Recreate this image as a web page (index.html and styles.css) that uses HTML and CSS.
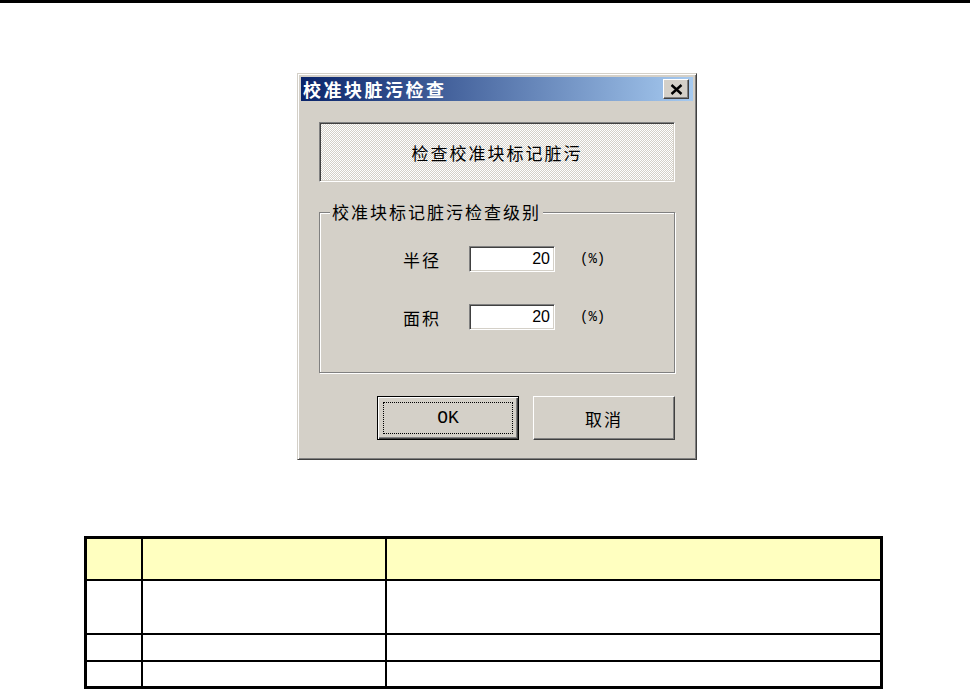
FILE: index.html
```html
<!DOCTYPE html>
<html lang="zh-CN">
<head>
  <meta charset="UTF-8" />
  <title>校准块脏污检查</title>
  <link rel="stylesheet" href="styles.css">
</head>
<body>
  <div class="page-rule"></div>

  <div class="figure">
    <form class="dialog" id="dirtForm">
      <div class="titlebar">
        <span class="title">校准块脏污检查</span>
        <button type="button" class="close" aria-label="关闭">
          <svg width="13" height="11" viewBox="0 0 13 11">
            <path d="M1.5 1L11.5 10M11.5 1L1.5 10" stroke="#000" stroke-width="2.4" fill="none"/>
          </svg>
        </button>
      </div>

      <div class="dialog-body">
        <div class="notice">检查校准块标记脏污</div>

        <fieldset class="levels">
          <legend>校准块标记脏污检查级别</legend>
          <div class="field-row">
            <label class="field-label" for="radius">半径</label>
            <input class="field" type="text" id="radius" value="20" />
            <span class="unit">(%)</span>
          </div>
          <div class="field-row">
            <label class="field-label" for="area">面积</label>
            <input class="field" type="text" id="area" value="20" />
            <span class="unit">(%)</span>
          </div>
        </fieldset>

        <div class="actions">
          <button type="submit" class="btn btn-default"><span class="focus">OK</span></button>
          <button type="button" class="btn">取消</button>
        </div>
      </div>
    </form>
  </div>

  <!-- parameter table -->
  <div class="spec">
    <div class="head"></div><div class="head"></div><div class="head"></div>
    <div></div><div></div><div></div>
    <div></div><div></div><div></div>
    <div></div><div></div><div></div>
  </div>
</body>
</html>
```

FILE: styles.css
```css
body {
  margin: 0;
  background: #fff;
  font-family: "Noto Sans CJK SC", sans-serif;
  color: #000;
}
.page-rule {
  height: 3px;
  background: #000;
}
.figure {
  display: flex;
  justify-content: center;
  padding: 70px 0 0 24px;
}

/* classic window */
.dialog {
  width: 400px;
  box-sizing: border-box;
  margin: 0;
  padding: 3px;
  background: #d4d0c8;
  border: 1px solid;
  border-color: #d4d0c8 #404040 #404040 #d4d0c8;
  box-shadow: inset 1px 1px #fff, inset -1px -1px #808080;
}
.titlebar {
  height: 24px;
  display: flex;
  align-items: center;
  justify-content: space-between;
  padding-left: 2px;
  background: linear-gradient(to right, #0a246a, #a6caf0);
}
.title {
  color: #fff;
  font-weight: bold;
  font-size: 18px;
  letter-spacing: 2.5px;
  line-height: 24px;
}
.close {
  width: 26px;
  height: 20px;
  margin-right: 4px;
  padding: 0;
  box-sizing: border-box;
  display: flex;
  align-items: center;
  justify-content: center;
  background: #d4d0c8;
  border: 1px solid;
  border-color: #fff #404040 #404040 #fff;
  box-shadow: inset -1px -1px #808080;
}
.dialog-body {
  padding: 21px 18px 16px;
}
.notice {
  height: 60px;
  box-sizing: border-box;
  display: flex;
  align-items: center;
  justify-content: center;
  font-size: 17px;
  letter-spacing: 2px;
  border: 1px solid;
  border-color: #808080 #fff #fff #808080;
  box-shadow: inset 1px 1px #404040, inset -1px -1px #d4d0c8;
  background: repeating-conic-gradient(#fff 0 25%, #d4d0c8 0 50%) 0 0 / 2px 2px;
}
.levels {
  margin: 20px 0 0;
  padding: 24px 0 42px 10px;
  border: 1px solid #808080;
  box-shadow: inset 1px 1px #fff, 1px 1px #fff;
  min-width: 0;
}
.levels legend {
  padding: 0 2px;
  font-size: 17px;
  letter-spacing: 2px;
  line-height: 20px;
  background: #d4d0c8;
}
.field-row {
  display: flex;
  align-items: center;
  padding-left: 73px;
}
.field-row + .field-row {
  margin-top: 32px;
}
.field-label {
  width: 66px;
  font-size: 17px;
  letter-spacing: 2px;
}
.field {
  width: 86px;
  height: 26px;
  box-sizing: border-box;
  margin: 0;
  padding: 0 4px;
  text-align: right;
  font: 16px "Liberation Sans", sans-serif;
  background: #fff;
  border: 1px solid;
  border-color: #808080 #fff #fff #808080;
  box-shadow: inset 1px 1px #404040, inset -1px -1px #d4d0c8;
}
.unit {
  margin-left: 25px;
  font: 14px "Liberation Mono", monospace;
}
.actions {
  display: flex;
  justify-content: flex-end;
  gap: 14px;
  margin-top: 23px;
}
.btn {
  width: 142px;
  height: 44px;
  box-sizing: border-box;
  padding: 0;
  background: #d4d0c8;
  font-family: "Noto Sans CJK SC", sans-serif;
  font-size: 17px;
  letter-spacing: 2px;
  color: #000;
  border: 1px solid;
  border-color: #fff #404040 #404040 #fff;
  box-shadow: inset -1px -1px #808080;
}
.btn-default {
  display: flex;
  padding: 5px;
  border-color: #000;
  box-shadow: inset 1px 1px #fff, inset -1px -1px #404040, inset -2px -2px #808080;
}
.focus {
  flex: 1;
  display: flex;
  align-items: center;
  justify-content: center;
  border: 1px dotted #000;
  font: 18px "Liberation Mono", monospace;
  letter-spacing: 0;
}

/* table below the figure */
.spec {
  display: grid;
  grid-template-columns: 54px 242px 493px;
  grid-template-rows: 40px 52px 25px 24px;
  gap: 2px;
  width: max-content;
  margin: 76px 0 0 84px;
  background: #000;
  border: 3px solid #000;
}
.spec div {
  background: #fff;
}
.spec .head {
  background: #ffffc0;
}
```
